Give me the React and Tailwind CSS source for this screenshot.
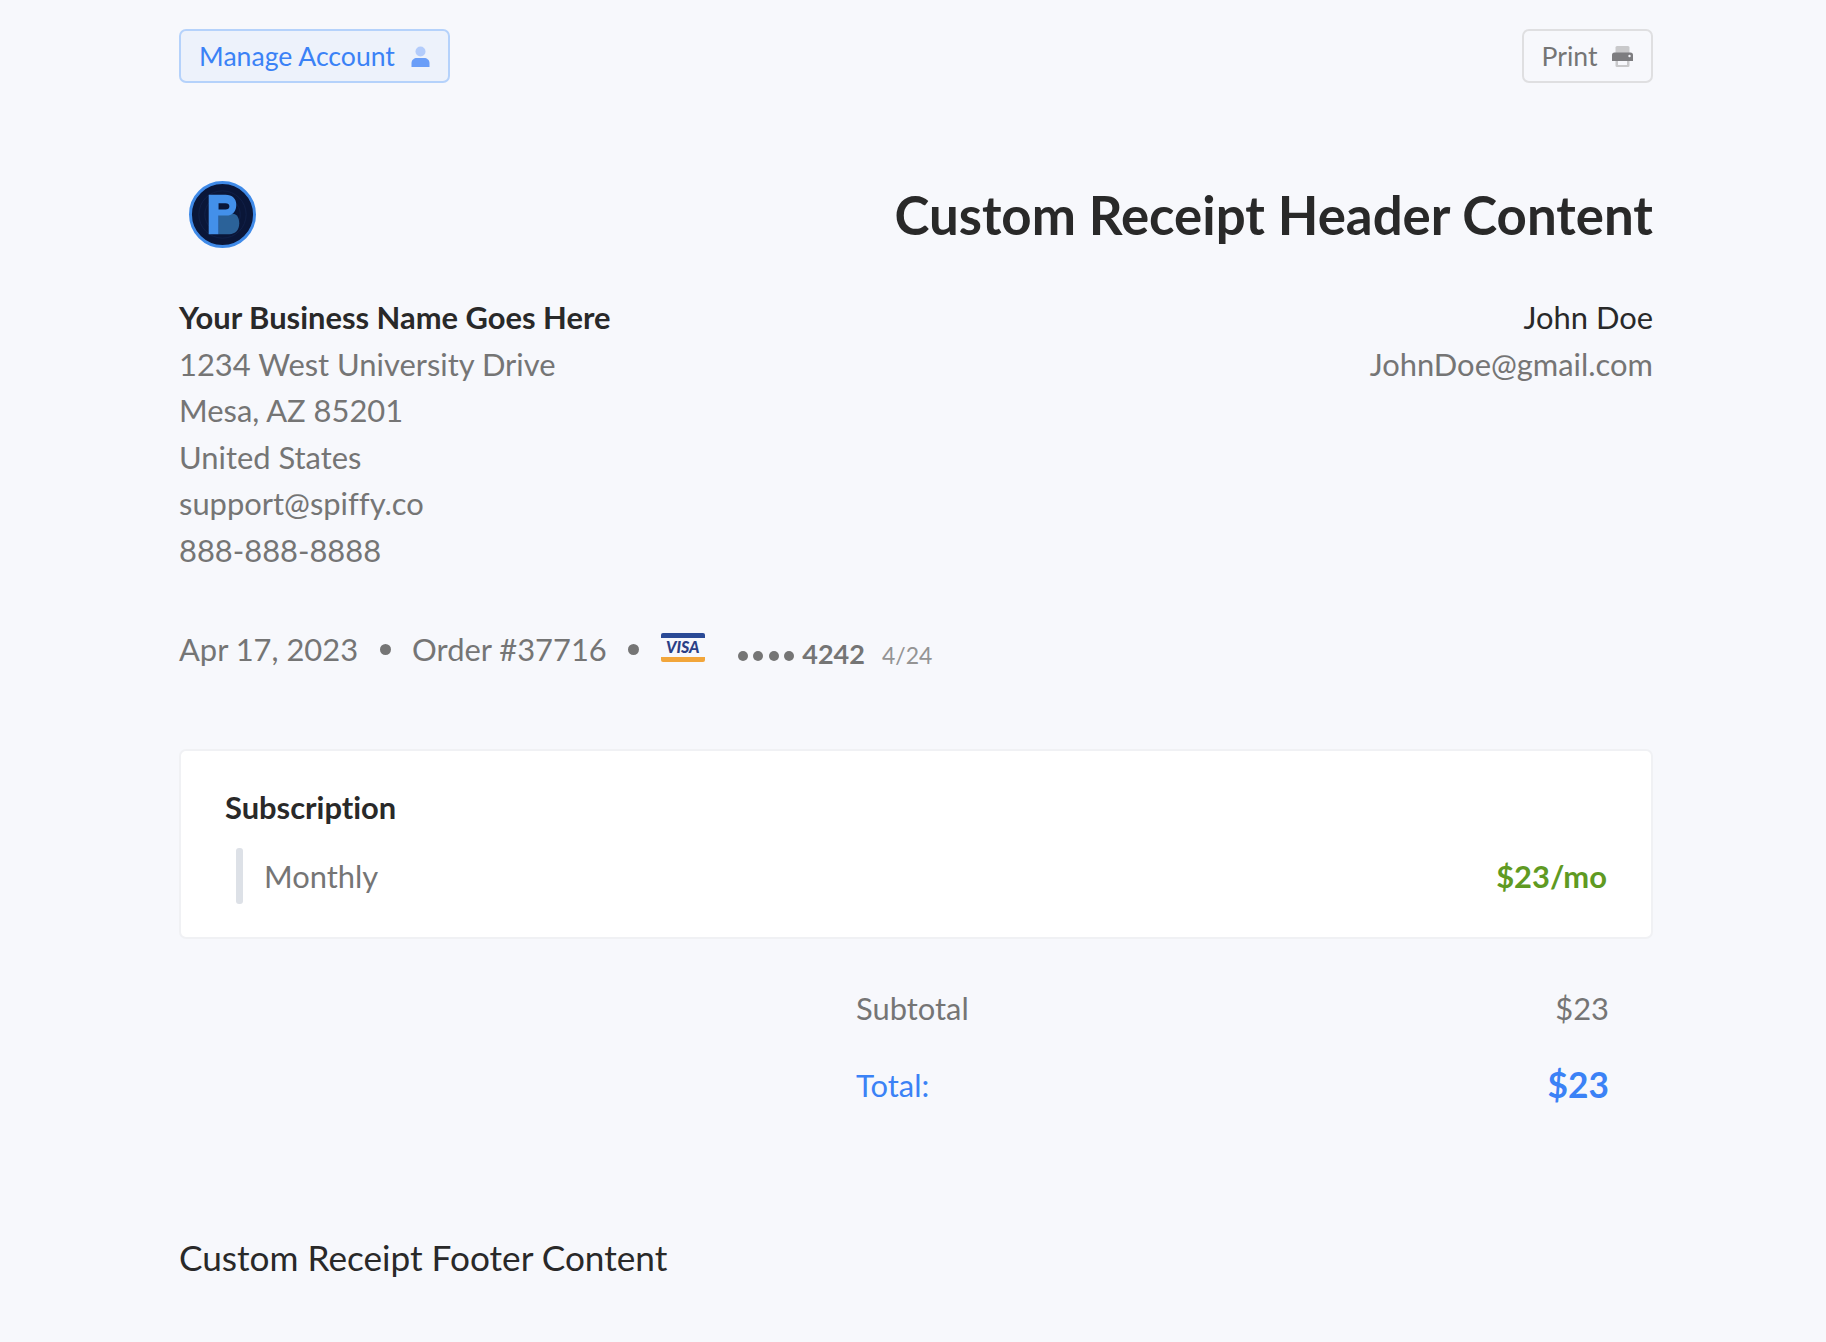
import React from 'react';

const PersonIcon = () => (
    <svg width="19" height="21" viewBox="0 0 19 21">
        <circle cx="9.5" cy="5.5" r="5" fill="#b3ccfb" />
        <path d="M0.5 21 V17 C0.5 14 3 12 6 12 H13 C16 12 18.5 14 18.5 17 V21 Z" fill="#6a9ef8" />
    </svg>
);

const PrintIcon = () => (
    <svg width="21" height="21" viewBox="0 0 21 21">
        <path d="M3.5 1.5 A1.5 1.5 0 0 1 5 0 H16 A1.5 1.5 0 0 1 17.5 1.5 V7 H3.5 Z" fill="#c9c9cb" />
        <path d="M3.5 14 H17.5 V19.5 A1.5 1.5 0 0 1 16 21 H5 A1.5 1.5 0 0 1 3.5 19.5 Z" fill="#c9c9cb" />
        <rect x="6" y="15" width="9" height="4" fill="#f7f8fc" />
        <path d="M2.5 6.5 H18.5 A2.5 2.5 0 0 1 21 9 V15 H0 V9 A2.5 2.5 0 0 1 2.5 6.5 Z" fill="#7d7d80" />
        <circle cx="17.5" cy="10" r="1.2" fill="#f7f8fc" />
    </svg>
);

const Logo = () => (
    <svg width="67" height="67" viewBox="0 0 68 68" className="mb-[1px]">
        <circle cx="34" cy="34" r="32.5" fill="#0a1638" stroke="#3f8ae8" strokeWidth="3" />
        <circle cx="34" cy="34" r="24" fill="none" stroke="#101f47" strokeWidth="1" />
        <circle cx="34" cy="34" r="18" fill="none" stroke="#101f47" strokeWidth="1" />
        <path d="M30 33 H43 C49 33 51 38 51 43 C51 50 47 54 41 54 H30 Z" fill="#2b6299" />
        <path d="M20 14 H37 C44 14 48 18 48 24 C48 30 45 34 40 35 H30 V54 H20 Z M30 22.5 V29 H37 C39.500 29 41 28 41 25.700 C41 23.500 39.500 22.500 37 22.500 Z" fill="#4390ea" fillRule="evenodd" />
    </svg>
);

const VisaIcon = () => (
    <div className="w-[44px] h-[29px] rounded-[2px] overflow-hidden flex flex-col bg-[#f7f8fc]">
        <div className="h-[5px] bg-[#2a4a96]" />
        <div className="flex-1 flex items-center justify-center text-[16px] leading-none font-black italic text-[#2a3f86]">VISA</div>
        <div className="h-[5px] bg-[#f2a63b]" />
    </div>
);

const Dot = () => <span className="w-[11px] h-[11px] rounded-full bg-[#757575]" />;

const ADDRESS = ['1234 West University Drive', 'Mesa, AZ 85201', 'United States', 'support@spiffy.co', '888-888-8888'];

export default function App() {
    return (
        <div className="min-h-[1342px] bg-[#f7f8fc] pl-[179px] pr-[173px] pt-[29px] font-['Lato','Inter',sans-serif] [font-variant-ligatures:none] text-[30.9px] leading-[46.5px] text-[#757575]">
            {/* Top buttons */}
            <div className="flex justify-between">
                <button className="h-[54px] w-[271px] flex items-center justify-center gap-[16px] rounded-[7px] border-2 border-[#b5d2fb] bg-[#edf2fb] text-[26.6px] text-[#3b82f6]">
                    Manage Account
                    <PersonIcon />
                </button>
                <button className="h-[54px] w-[131px] flex items-center justify-center gap-[15px] rounded-[7px] border-2 border-[#dfdfe1] text-[26.6px] text-[#757575]">
                    Print
                    <PrintIcon />
                </button>
            </div>

            {/* Logo and title */}
            <div className="flex items-center justify-between mt-[98px] pl-[10px]">
                <Logo />
                <h1 className="text-[52.8px] leading-[68px] font-bold text-[#292929]">Custom Receipt Header Content</h1>
            </div>

            {/* Business and customer */}
            <div className="flex justify-between mt-[46px]">
                <div>
                    <div className="font-bold text-[#292929]">Your Business Name Goes Here</div>
                    {ADDRESS.map(line => <div key={line}>{line}</div>)}
                </div>
                <div className="text-right">
                    <div className="text-[#292929]">John Doe</div>
                    <div>JohnDoe@gmail.com</div>
                </div>
            </div>

            {/* Order meta */}
            <div className="flex items-center mt-[52px] h-[46px]">
                <span className="pt-[2px]">Apr 17, 2023</span>
                <span className="mx-[21.5px] flex"><Dot /></span>
                <span className="pt-[2px]">Order #37716</span>
                <span className="mx-[21.5px] flex"><Dot /></span>
                <span className="-mt-[4px]"><VisaIcon /></span>
                <span className="flex items-center gap-[5.5px] ml-[33px] mt-[14px]">
                    <span className="w-[10px] h-[10px] rounded-full bg-[#757575]" />
                    <span className="w-[10px] h-[10px] rounded-full bg-[#757575]" />
                    <span className="w-[10px] h-[10px] rounded-full bg-[#757575]" />
                    <span className="w-[10px] h-[10px] rounded-full bg-[#757575]" />
                </span>
                <span className="ml-[8px] mt-[10px] text-[27px] font-bold">4242</span>
                <span className="ml-[17px] mt-[12px] text-[23px] text-[#949494]">4/24</span>
            </div>

            {/* Line items */}
            <div className="mt-[77px] h-[190px] rounded-[7px] border-2 border-[#f0f1f4] bg-white pl-[44px] pr-[44px] pt-[34px]">
                <div className="font-bold text-[#292929]">Subscription</div>
                <div className="flex items-center justify-between mt-[16px]">
                    <div className="flex items-center">
                        <span className="ml-[11px] w-[7px] h-[56px] rounded-[3px] bg-[#dde1e7]" />
                        <span className="ml-[21px] pt-[4px]">Monthly</span>
                    </div>
                    <span className="pt-[4px] font-bold text-[#5f9a22]">$23/mo</span>
                </div>
            </div>

            {/* Totals */}
            <div className="ml-[677px] mr-[44px] mt-[47px]">
                <div className="flex justify-between">
                    <span>Subtotal</span>
                    <span>$23</span>
                </div>
                <div className="flex items-center justify-between mt-[29px] text-[#3b82f6]">
                    <span>Total:</span>
                    <span className="text-[35.300px] font-bold mb-[2px]">$23</span>
                </div>
            </div>

            {/* Footer */}
            <div className="mt-[124px] text-[35.200px] text-[#292929]">Custom Receipt Footer Content</div>
        </div>
    );
}
